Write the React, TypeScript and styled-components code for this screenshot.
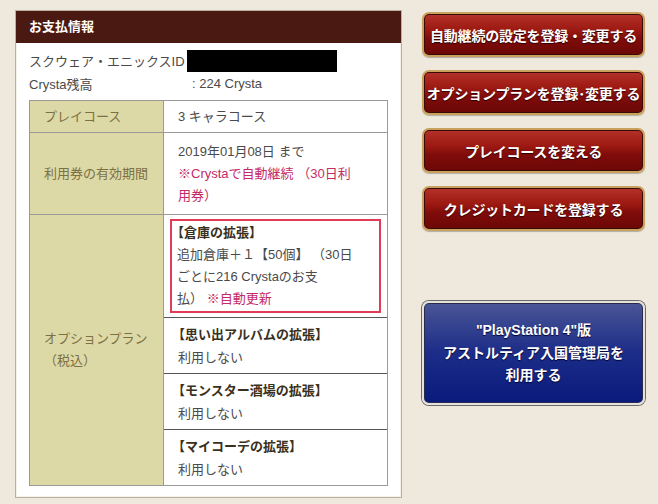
import React from "react";
import styled, { createGlobalStyle } from "styled-components";

const GlobalStyle = createGlobalStyle`
  body {
    margin: 0;
    background: #efe8dc;
    font-family: "Liberation Sans", "Noto Sans CJK JP", sans-serif;
  }
`;

const Page = styled.div`
  display: flex;
  align-items: flex-start;
  gap: 20px;
  padding: 10px 0 0 15px;
  width: 658px;
  height: 504px;
  box-sizing: border-box;
`;

const Panel = styled.section`
  width: 387px;
  height: 488px;
  box-sizing: border-box;
  background: #fff;
  border: 1px solid #b9b0a2;
  box-shadow: inset 0 0 0 1px #f4f0ea;
`;

const PanelHeader = styled.h2`
  margin: 0;
  height: 32px;
  line-height: 32px;
  padding-left: 13px;
  background: #4a1a12;
  color: #fff;
  font-size: 13px;
  font-weight: bold;
`;

const PanelBody = styled.div`
  padding: 6px 14px 0 13px;
`;

const InfoRow = styled.div`
  display: flex;
  align-items: center;
  height: 23px;
  font-size: 13px;
  color: #4a4a4a;
`;

const InfoLabel = styled.span<{ w?: number }>`
  width: ${(p) => (p.w ? `${p.w}px` : "auto")};
`;

const Redacted = styled.span`
  display: inline-block;
  margin-left: 2px;
  width: 150px;
  height: 22px;
  background: #000;
`;

const Table = styled.table`
  margin-top: 5px;
  width: 359px;
  border-collapse: collapse;
  font-size: 13px;
  border: 1px solid #9a9a9a;
`;

const LabelCell = styled.th`
  width: 134px;
  box-sizing: border-box;
  background: #dcd9a6;
  color: #7d7044;
  font-weight: normal;
  text-align: left;
  padding: 0 0 0 14px;
  border: 1px solid #9a9a9a;
  line-height: 22px;
`;

const ValueCell = styled.td<{ h?: number }>`
  height: ${(p) => (p.h ? `${p.h}px` : "auto")};
  box-sizing: border-box;
  color: #4a4a4a;
  padding: 4px 6px 4px 14px;
  border: 1px solid #9a9a9a;
  line-height: 22px;
  vertical-align: middle;
  white-space: nowrap;
`;

const OptionCell = styled.td<{ h: number }>`
  height: ${(p) => p.h}px;
  box-sizing: border-box;
  color: #4a4a4a;
  padding: 2px 6px 2px 14px;
  border-top: 1px solid #555;
  border-right: 1px solid #9a9a9a;
  line-height: 23px;
  vertical-align: middle;
  white-space: nowrap;
`;

const Highlight = styled.div`
  margin-left: -8px;
  border: 2px solid #e03c58;
  padding: 1px 4px 1px 5px;
  line-height: 22px;
`;

const Title = styled.div`
  color: #3a3020;
  font-weight: bold;
  margin-left: -6px;
`;

const Red = styled.span`
  color: #c42a66;
`;

const Side = styled.aside`
  display: flex;
  flex-direction: column;
  width: 223px;
  padding-top: 2px;
`;

const RedButton = styled.button`
  height: 45px;
  margin-bottom: 13px;
  border-radius: 7px;
  border: 2px solid #c8a25c;
  box-shadow: inset 0 0 0 1px #3a0a06, 0 1px 1px rgba(0, 0, 0, 0.25);
  background: linear-gradient(#b4322a 0%, #9c1812 40%, #800c0a 60%, #6a0806 100%);
  color: #fff;
  font-family: "Noto Sans CJK JP", sans-serif;
  font-size: 14px;
  font-weight: bold;
  letter-spacing: -0.2px;
  text-shadow: 0 1px 1px #2a0000;
  white-space: nowrap;
  padding: 0;
  cursor: pointer;
`;

const BlueButton = styled.button`
  margin-top: 57px;
  height: 104px;
  border-radius: 7px;
  border: 2px solid #e6e2da;
  box-shadow: 0 0 0 1px #6a6a6a, inset 0 0 0 1px #2a2a50;
  background: linear-gradient(#4a5696 0%, #1c2c88 50%, #0a1a7c 100%);
  color: #fff;
  font-family: "Liberation Sans", "Noto Sans CJK JP", sans-serif;
  font-size: 14px;
  font-weight: bold;
  line-height: 22.5px;
  text-shadow: 0 1px 1px #000030;
  padding: 0;
  cursor: pointer;
`;

export default function App() {
  return (
    <Page>
      <GlobalStyle />
      <Panel>
        <PanelHeader>お支払情報</PanelHeader>
        <PanelBody>
          <InfoRow>
            <InfoLabel>スクウェア・エニックスID</InfoLabel>
            <Redacted />
          </InfoRow>
          <InfoRow>
            <InfoLabel w={163}>Crysta残高</InfoLabel>
            <span>: 224 Crysta</span>
          </InfoRow>
          <Table>
            <tbody>
              <tr>
                <LabelCell>プレイコース</LabelCell>
                <ValueCell h={32}>3 キャラコース</ValueCell>
              </tr>
              <tr>
                <LabelCell>利用券の有効期間</LabelCell>
                <ValueCell h={82}>
                  2019年01月08日 まで
                  <br />
                  <Red>
                    ※Crystaで自動継続 （30日利
                    <br />
                    用券）
                  </Red>
                </ValueCell>
              </tr>
              <tr>
                <LabelCell rowSpan={4}>
                  オプションプラン
                  <br />
                  （税込）
                </LabelCell>
                <OptionCell h={103}>
                  <Highlight>
                    <Title>【倉庫の拡張】</Title>
                    追加倉庫＋１【50個】 （30日
                    <br />
                    ごとに216 Crystaのお支
                    <br />
                    払） <Red>※自動更新</Red>
                  </Highlight>
                </OptionCell>
              </tr>
              {["思い出アルバムの拡張", "モンスター酒場の拡張", "マイコーデの拡張"].map((name) => (
                <tr key={name}>
                  <OptionCell h={56}>
                    <Title>【{name}】</Title>
                    利用しない
                  </OptionCell>
                </tr>
              ))}
            </tbody>
          </Table>
        </PanelBody>
      </Panel>
      <Side>
        <RedButton>自動継続の設定を登録・変更する</RedButton>
        <RedButton>オプションプランを登録･変更する</RedButton>
        <RedButton>プレイコースを変える</RedButton>
        <RedButton>クレジットカードを登録する</RedButton>
        <BlueButton>
          "PlayStation 4"版
          <br />
          アストルティア入国管理局を
          <br />
          利用する
        </BlueButton>
      </Side>
    </Page>
  );
}
